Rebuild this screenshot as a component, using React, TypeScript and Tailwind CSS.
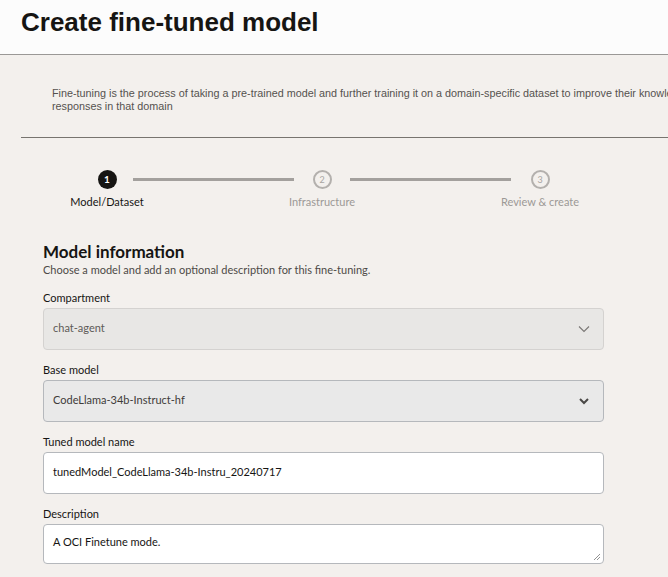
const sans = { fontFamily: 'Lato, "Noto Sans", sans-serif' };

function Step({ n, label, active }: { n: number; label: string; active?: boolean }) {
  return (
    <div className="flex w-[110px] flex-col items-center">
      <div
        className={
          active
            ? 'flex h-[19px] w-[19px] items-center justify-center rounded-full bg-[#161513] text-[10px] font-bold text-white'
            : 'flex h-[19px] w-[19px] items-center justify-center rounded-full border-2 border-[#b3b0ad] text-[9px] text-[#a8a5a2]'
        }
      >
        {n}
      </div>
      <div className={'mt-[5px] whitespace-nowrap text-[11px] ' + (active ? 'text-[#161513]' : 'text-[#9c9996]')}>{label}</div>
    </div>
  );
}

function Chevron({ bold }: { bold?: boolean }) {
  return (
    <svg width="12" height="8" viewBox="0 0 12 8" fill="none">
      <path
        d={bold ? 'M2 2l4 4 4-4' : 'M1 1.5l5 5 5-5'}
        stroke={bold ? '#4a4846' : '#7a7775'}
        strokeWidth={bold ? 2 : 1.1}
      />
    </svg>
  );
}

export default function App() {
  return (
    <div className="min-h-[577px] w-[668px] overflow-hidden bg-[#f3f0ed]" style={sans}>
      <header className="h-[55px] border-b border-[#9a9896] bg-[#fcfcfc] pl-[21px] pt-[4px]">
        <h1
          className="text-[26px] font-bold leading-[36px] text-[#161513]"
          style={{ fontFamily: '"Liberation Sans", Arial, sans-serif' }}
        >
          Create fine-tuned model
        </h1>
      </header>

      <div className="pl-[21px]">
        <p
          className="whitespace-nowrap pl-[31px] pt-[32px] text-[10.8px] leading-[13px] text-[#55524f]"
          style={{ fontFamily: '"Liberation Sans", Arial, sans-serif' }}
        >
          Fine-tuning is the process of taking a pre-trained model and further training it on a domain-specific dataset to improve their knowledge and
          <br />
          responses in that domain
        </p>
        <div className="mt-[24px] h-px bg-[#77746f]" />
      </div>

      <div className="flex items-start pl-[52px] pt-[32px]">
        <Step n={1} label="Model/Dataset" active />
        <div className="-ml-[29px] -mr-[27px] mt-[8px] h-[3px] w-[161px] bg-[#a3a09d]" />
        <Step n={2} label="Infrastructure" />
        <div className="-ml-[27px] -mr-[26px] mt-[8px] h-[3px] w-[161px] bg-[#a3a09d]" />
        <Step n={3} label="Review & create" />
      </div>

      <section className="w-[604px] pl-[43px] pt-[30px]">
        <h2 className="text-[17px] font-bold leading-[22px] text-[#161513]">Model information</h2>
        <p className="text-[11px] leading-[14px] text-[#4d4a47]">Choose a model and add an optional description for this fine-tuning.</p>

        <div className="mt-[14px] text-[11px] leading-[14px] text-[#161513]">Compartment</div>
        <div className="mt-[3px] flex h-[42px] items-center justify-between rounded-[4px] border border-[#d4d2d0] bg-[#e8e7e5] pl-[9px] pr-[13px]">
          <span className="text-[11px] text-[#5e5b58]">chat-agent</span>
          <Chevron />
        </div>

        <div className="mt-[13px] text-[11px] leading-[14px] text-[#161513]">Base model</div>
        <div className="mt-[3px] flex h-[42px] items-center justify-between rounded-[4px] border border-[#b5b8bc] bg-[#e9e9e9] pl-[9px] pr-[13px]">
          <span className="text-[11px] text-[#3e3b39]">CodeLlama-34b-Instruct-hf</span>
          <Chevron bold />
        </div>

        <div className="mt-[13px] text-[11px] leading-[14px] text-[#161513]">Tuned model name</div>
        <div className="mt-[3px] flex h-[42px] items-center rounded-[4px] border border-[#b5b8bc] bg-white pl-[9px]">
          <span className="text-[11px] text-[#161513]">tunedModel_CodeLlama-34b-Instru_20240717</span>
        </div>

        <div className="mt-[13px] text-[11px] leading-[14px] text-[#161513]">Description</div>
        <div className="relative mt-[3px] h-[40px] rounded-[4px] border border-[#b5b8bc] bg-white pl-[9px] pt-[3px]">
          <span className="text-[11px] text-[#161513]">A OCI Finetune mode.</span>
          <svg className="absolute bottom-[2px] right-[2px]" width="8" height="8" viewBox="0 0 8 8">
            <path d="M7 1L1 7M7 4L4 7" stroke="#777" strokeWidth="0.8" />
          </svg>
        </div>
      </section>
    </div>
  );
}
